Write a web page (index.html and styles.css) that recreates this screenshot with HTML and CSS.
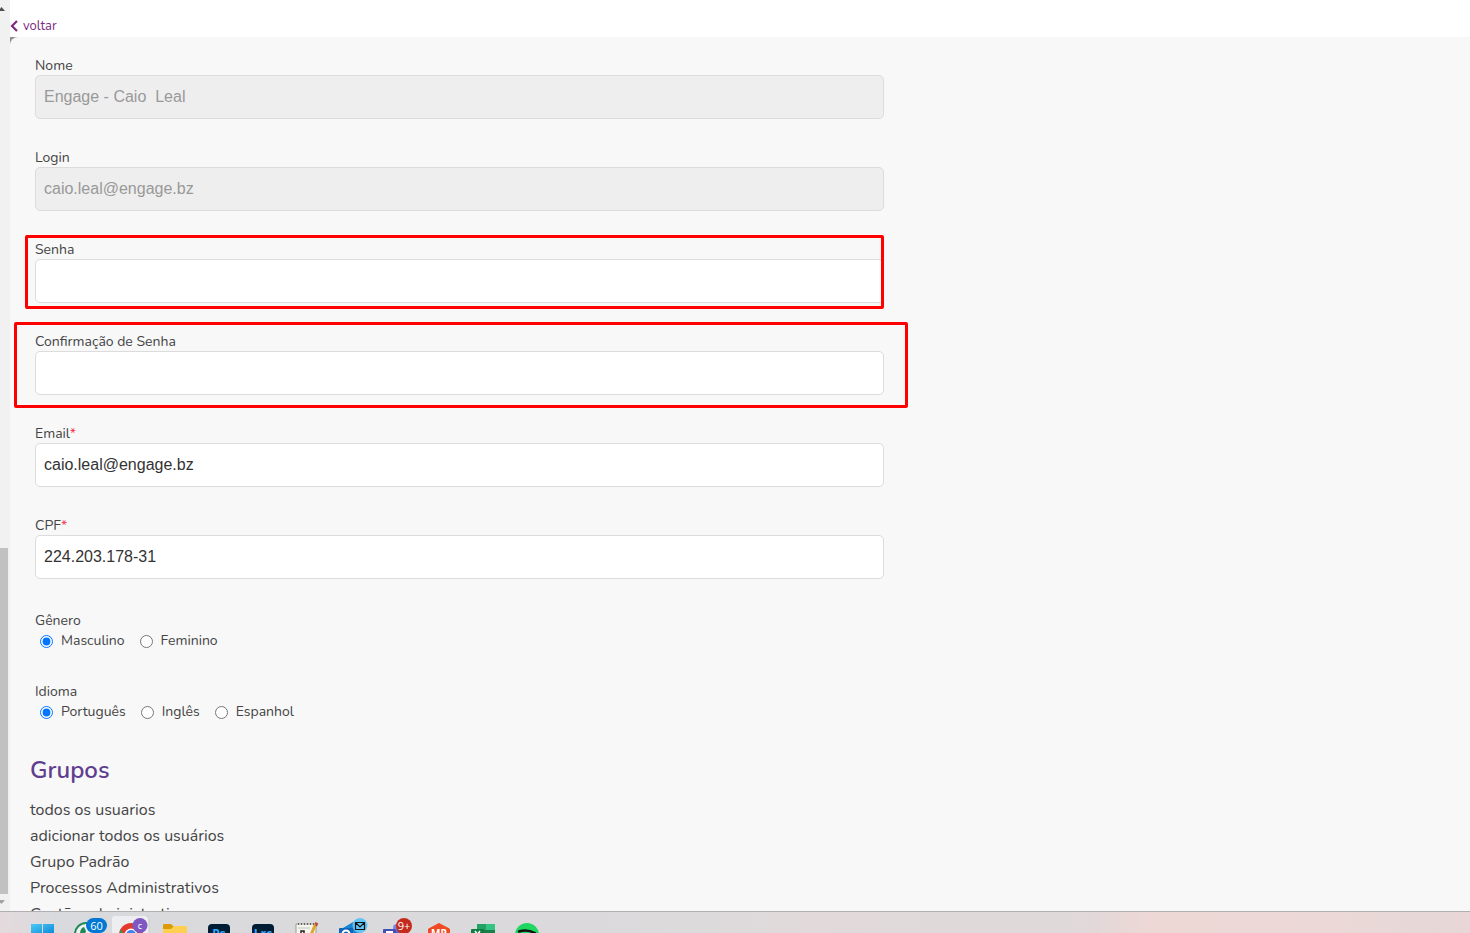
FILE: index.html
```html
<!DOCTYPE html>
<html lang="pt-BR">
<head>
<meta charset="utf-8">
<meta name="viewport" content="width=device-width, initial-scale=1">
<title>Editar usuário</title>
<link rel="stylesheet" href="styles.css">
</head>
<body>
<div class="window">
  <div class="scrollbar" aria-hidden="true">
    <svg class="scroll-arrow" viewBox="0 0 10 17"><path d="M-2 11 L1.500 7 L5 11Z" fill="#505050"/></svg>
    <div class="scroll-track"><div class="scroll-thumb"></div></div>
    <svg class="scroll-arrow" viewBox="0 0 10 17"><path d="M-2 6 L5 6 L1.500 10Z" fill="#a3a3a3"/></svg>
  </div>
  <div class="page">
    <header class="topbar">
      <a class="back" href="#">
        <svg class="back-icon" viewBox="0 0 8 12"><path d="M7 1 L2 6 L7 11" fill="none" stroke="#7b2b7f" stroke-width="2.200"/></svg>
        voltar
      </a>
    </header>
    <div class="panel-back">
      <main class="panel">
        <form class="form">
          <div class="field">
            <label class="label" for="nome">Nome</label>
            <input class="input" id="nome" type="text" value="Engage - Caio  Leal" disabled>
          </div>
          <div class="field">
            <label class="label" for="login">Login</label>
            <input class="input" id="login" type="text" value="caio.leal@engage.bz" disabled>
          </div>
          <div class="field">
            <label class="label" for="senha">Senha</label>
            <input class="input" id="senha" type="password">
            <span class="mark mark-senha"></span>
          </div>
          <div class="field">
            <label class="label" for="confirma">Confirmação de Senha</label>
            <input class="input" id="confirma" type="password">
            <span class="mark mark-confirma"></span>
          </div>
          <div class="field">
            <label class="label" for="email">Email<span class="required">*</span></label>
            <input class="input" id="email" type="text" value="caio.leal@engage.bz">
          </div>
          <div class="field">
            <label class="label" for="cpf">CPF<span class="required">*</span></label>
            <input class="input" id="cpf" type="text" value="224.203.178-31">
          </div>
          <div class="preferences">
            <fieldset class="choices">
              <legend class="label">Gênero</legend>
              <div class="options">
                <label class="option"><input class="radio" type="radio" name="genero" checked>Masculino</label>
                <label class="option"><input class="radio" type="radio" name="genero">Feminino</label>
              </div>
            </fieldset>
            <fieldset class="choices">
              <legend class="label">Idioma</legend>
              <div class="options">
                <label class="option"><input class="radio" type="radio" name="idioma" checked>Português</label>
                <label class="option"><input class="radio" type="radio" name="idioma">Inglês</label>
                <label class="option"><input class="radio" type="radio" name="idioma">Espanhol</label>
              </div>
            </fieldset>
          </div>
        </form>
        <section class="groups">
          <h2 class="groups-title">Grupos</h2>
          <ul class="groups-list">
            <li>todos os usuarios</li>
            <li>adicionar todos os usuários</li>
            <li>Grupo Padrão</li>
            <li>Processos Administrativos</li>
            <li>Gestão administrativa</li>
          </ul>
        </section>
      </main>
    </div>
  </div>
</div>
<nav class="taskbar" aria-label="Barra de tarefas">
  <svg class="app" viewBox="0 0 44 21">
    <defs><linearGradient id="win" x1="0" y1="0" x2="1" y2="1"><stop offset="0" stop-color="#4cc9f5"/><stop offset="1" stop-color="#0a84d8"/></linearGradient></defs>
    <path d="M11 12h11v11H11zM23 12h11v11H23z" fill="url(#win)"/>
  </svg>
  <svg class="app" viewBox="0 0 44 21">
    <circle cx="22" cy="22" r="11" fill="#eef3f0" stroke="#23875a" stroke-width="2"/>
    <path d="M16 22q0-6 4-7l2 4-1 3z" fill="#23875a"/>
    <rect x="22" y="6" width="21" height="15" rx="7.500" fill="#0078d4"/>
    <text class="badge-text" x="32.500" y="18" font-size="11">60</text>
  </svg>
  <svg class="app" viewBox="0 0 44 21">
    <rect x="4" y="4" width="37" height="24" rx="3" fill="#edeef0"/>
    <path d="M38 4q3 0 3 3v16" fill="none" stroke="#c9cacc"/>
    <circle cx="23" cy="23" r="12" fill="#e33b2e"/>
    <path d="M12.600 17L20 30L11 25Z" fill="#259b4d"/>
    <circle cx="23" cy="23" r="6.500" fill="#fff"/>
    <circle cx="23" cy="23" r="5" fill="#3c83ee"/>
    <circle cx="32" cy="13.500" r="7.500" fill="#7e57c2"/>
    <text class="badge-text" x="32" y="17" font-size="9">c</text>
  </svg>
  <svg class="app" viewBox="0 0 44 21">
    <path d="M11 13q0-1 1-1h7l3 3-3 3h-8z" fill="#dc9a08"/>
    <path d="M11 17h8l3-3h12q1 0 1 1v8H11z" fill="#ffd04f"/>
  </svg>
  <svg class="app" viewBox="0 0 44 21">
    <rect x="12" y="12" width="22" height="22" rx="4" fill="#001d34"/>
    <text class="adobe" x="23" y="26">Ps</text>
  </svg>
  <svg class="app" viewBox="0 0 44 21">
    <rect x="12" y="12" width="22" height="22" rx="4" fill="#001d34"/>
    <text class="adobe" x="23" y="26">Lrc</text>
  </svg>
  <svg class="app" viewBox="0 0 44 21">
    <path d="M12 12h20v12H12z" fill="#f5f5ee" stroke="#9b9b94"/>
    <path d="M14 12h17" stroke="#666" stroke-width="2" stroke-dasharray="1 2"/>
    <path d="M14 16h12" stroke="#b9c9b9"/>
    <path d="M17 23v-4h3v4" fill="none" stroke="#222" stroke-width="1.500"/>
    <path d="M31.500 12L27 23" stroke="#e1a62b" stroke-width="3"/>
    <path d="M31 11l2 1-1 2" stroke="#b54b42" stroke-width="2" fill="none"/>
  </svg>
  <svg class="app" viewBox="0 0 44 21">
    <path d="M15 16L25 10l8 6v8H15z" fill="#1685d4"/>
    <rect x="11" y="16" width="14" height="12" rx="1" fill="#0f65b8"/>
    <circle cx="18" cy="22" r="3.500" fill="none" stroke="#fff" stroke-width="2"/>
    <circle cx="32" cy="13.500" r="7.500" fill="#62c5f5"/>
    <path d="M27.500 10.500h9v7h-9zM28 11l4 4 4-4" fill="none" stroke="#111" stroke-width="1.200"/>
  </svg>
  <svg class="app" viewBox="0 0 44 21">
    <circle cx="25" cy="16" r="4" fill="#7986e4"/>
    <path d="M19 18h16v6H19z" fill="#5a62c8"/>
    <rect x="11" y="17" width="13" height="12" rx="1" fill="#464eb8"/>
    <path d="M14 20h7M17.500 20v5" stroke="#fff" stroke-width="2"/>
    <circle cx="32" cy="14" r="8" fill="#c42b1c"/>
    <text class="badge-text" x="32" y="18" font-size="11">9+</text>
  </svg>
  <svg class="app" viewBox="0 0 44 21">
    <path d="M23 11.500l10.500 5.500v12h-21V17z" fill="#f04a23" stroke="#f04a23" stroke-linejoin="round"/>
    <text class="mr" x="23" y="25">MR</text>
  </svg>
  <svg class="app" viewBox="0 0 44 21">
    <path d="M17 12h9v10h-9z" fill="#21a366"/>
    <path d="M26 12h9v8h-9z" fill="#33c481"/>
    <path d="M17 18h18v5H17z" fill="#17804a"/>
    <rect x="11" y="17" width="13" height="12" rx="1" fill="#107c41"/>
    <path d="M15 19l5 7M20 19l-5 7" stroke="#fff" stroke-width="1.600"/>
  </svg>
  <svg class="app" viewBox="0 0 44 21">
    <circle cx="23" cy="23" r="12" fill="#1ed760"/>
    <path d="M15 19.500q8-2.500 16 1.500" fill="none" stroke="#111" stroke-width="2.500" stroke-linecap="round"/>
  </svg>
</nav>
</body>
</html>
```
FILE: styles.css
```css
* { box-sizing: border-box; }

body {
  margin: 0;
  height: 100vh;
  display: flex;
  flex-direction: column;
  overflow: hidden;
  background: #fff;
  color: #444;
  font-family: Nunito, "Open Sans", "Noto Sans", sans-serif;
  font-weight: 400;
}

.window {
  flex: 1;
  min-height: 0;
  display: flex;
  overflow: hidden;
}

.scrollbar {
  width: 10px;
  flex: none;
  display: flex;
  flex-direction: column;
  background: #f1f1f1;
}
.scroll-arrow { width: 10px; height: 17px; flex: none; display: block; }
.scroll-track {
  flex: 1;
  display: flex;
  flex-direction: column;
  justify-content: flex-end;
}
.scroll-thumb { width: 8px; height: 39.5%; background: #c1c1c1; }

.page {
  flex: 1;
  min-width: 0;
  display: flex;
  flex-direction: column;
}

.topbar { padding-top: 16px; height: 37px; flex: none; }
.back {
  display: inline-flex;
  align-items: center;
  gap: 5px;
  font-size: 13px;
  line-height: 20px;
  color: #7b2b7f;
  text-decoration: none;
}
.back-icon { width: 8px; height: 12px; }

.panel-back { flex: 1; background: linear-gradient(90deg, #8f8f8f 20px, #f8f8f8 20px); }
.panel {
  min-height: 100%;
  padding: 20px 20px 0;
  background: #f8f8f8;
  border-top-left-radius: 8px;
}

.form { padding-left: 5px; }
.field {
  position: relative;
  width: 60%;
  margin-bottom: 30px;
}
.label {
  display: block;
  padding: 0;
  font-size: 14px;
  line-height: 18px;
}
.required { color: #f5364c; }
.input {
  display: block;
  width: 100%;
  height: 44px;
  padding: 0 8px;
  border: 1px solid #dcdcdc;
  border-radius: 5px;
  background: #fff;
  color: #333;
  font-family: "Liberation Sans", Arial, sans-serif;
  font-size: 16px;
}
.input:disabled { background: #eee; color: #999; }

.mark {
  position: absolute;
  border: 3px solid #f00;
  border-radius: 2px;
  pointer-events: none;
}
.mark-senha { inset: -6px 0 -6px -10px; }
.mark-confirma { inset: -11px -24px -13px -21px; }

.preferences { padding-top: 3px; }
.choices {
  margin: 0 0 31px;
  padding: 0;
  border: 0;
}
.options {
  display: flex;
  gap: 15px;
  padding: 0 0 0 5px;
}
.option {
  display: flex;
  align-items: center;
  gap: 8px;
  font-size: 14px;
  line-height: 22px;
}
.radio { width: 13px; height: 13px; margin: 0; }

.groups-title {
  margin: 0 0 11px;
  font-size: 24px;
  line-height: 32px;
  font-weight: 600;
  color: #5f3d8f;
}
.groups-list {
  margin: 0;
  padding: 0;
  list-style: none;
  font-size: 16px;
  line-height: 26px;
}

.taskbar {
  flex: none;
  display: flex;
  height: 22px;
  padding-left: 20px;
  border-top: 1px solid #b0aeb0;
  background: linear-gradient(90deg, #e4dadd 0, #d9dadd 4%, #dbd9db 38%, #dcdadb 48%, #e1d9da 55%, #dfd9da 72%, #e1d8d9 74%, #edd8d5 78%, #ecd8d7 90%, #e6d8d7 97%, #e9d6d6 100%);
}
.app { width: 44px; height: 21px; flex: none; display: block; }
.badge-text {
  fill: #fff;
  font-family: "Open Sans", sans-serif;
  font-weight: 400;
  text-anchor: middle;
}
.adobe {
  fill: #31a8ff;
  font-family: "Open Sans", sans-serif;
  font-size: 12px;
  font-weight: 700;
  text-anchor: middle;
}
.mr {
  fill: #fff;
  font-family: "Open Sans", sans-serif;
  font-size: 10px;
  font-weight: 700;
  text-anchor: middle;
}
```
